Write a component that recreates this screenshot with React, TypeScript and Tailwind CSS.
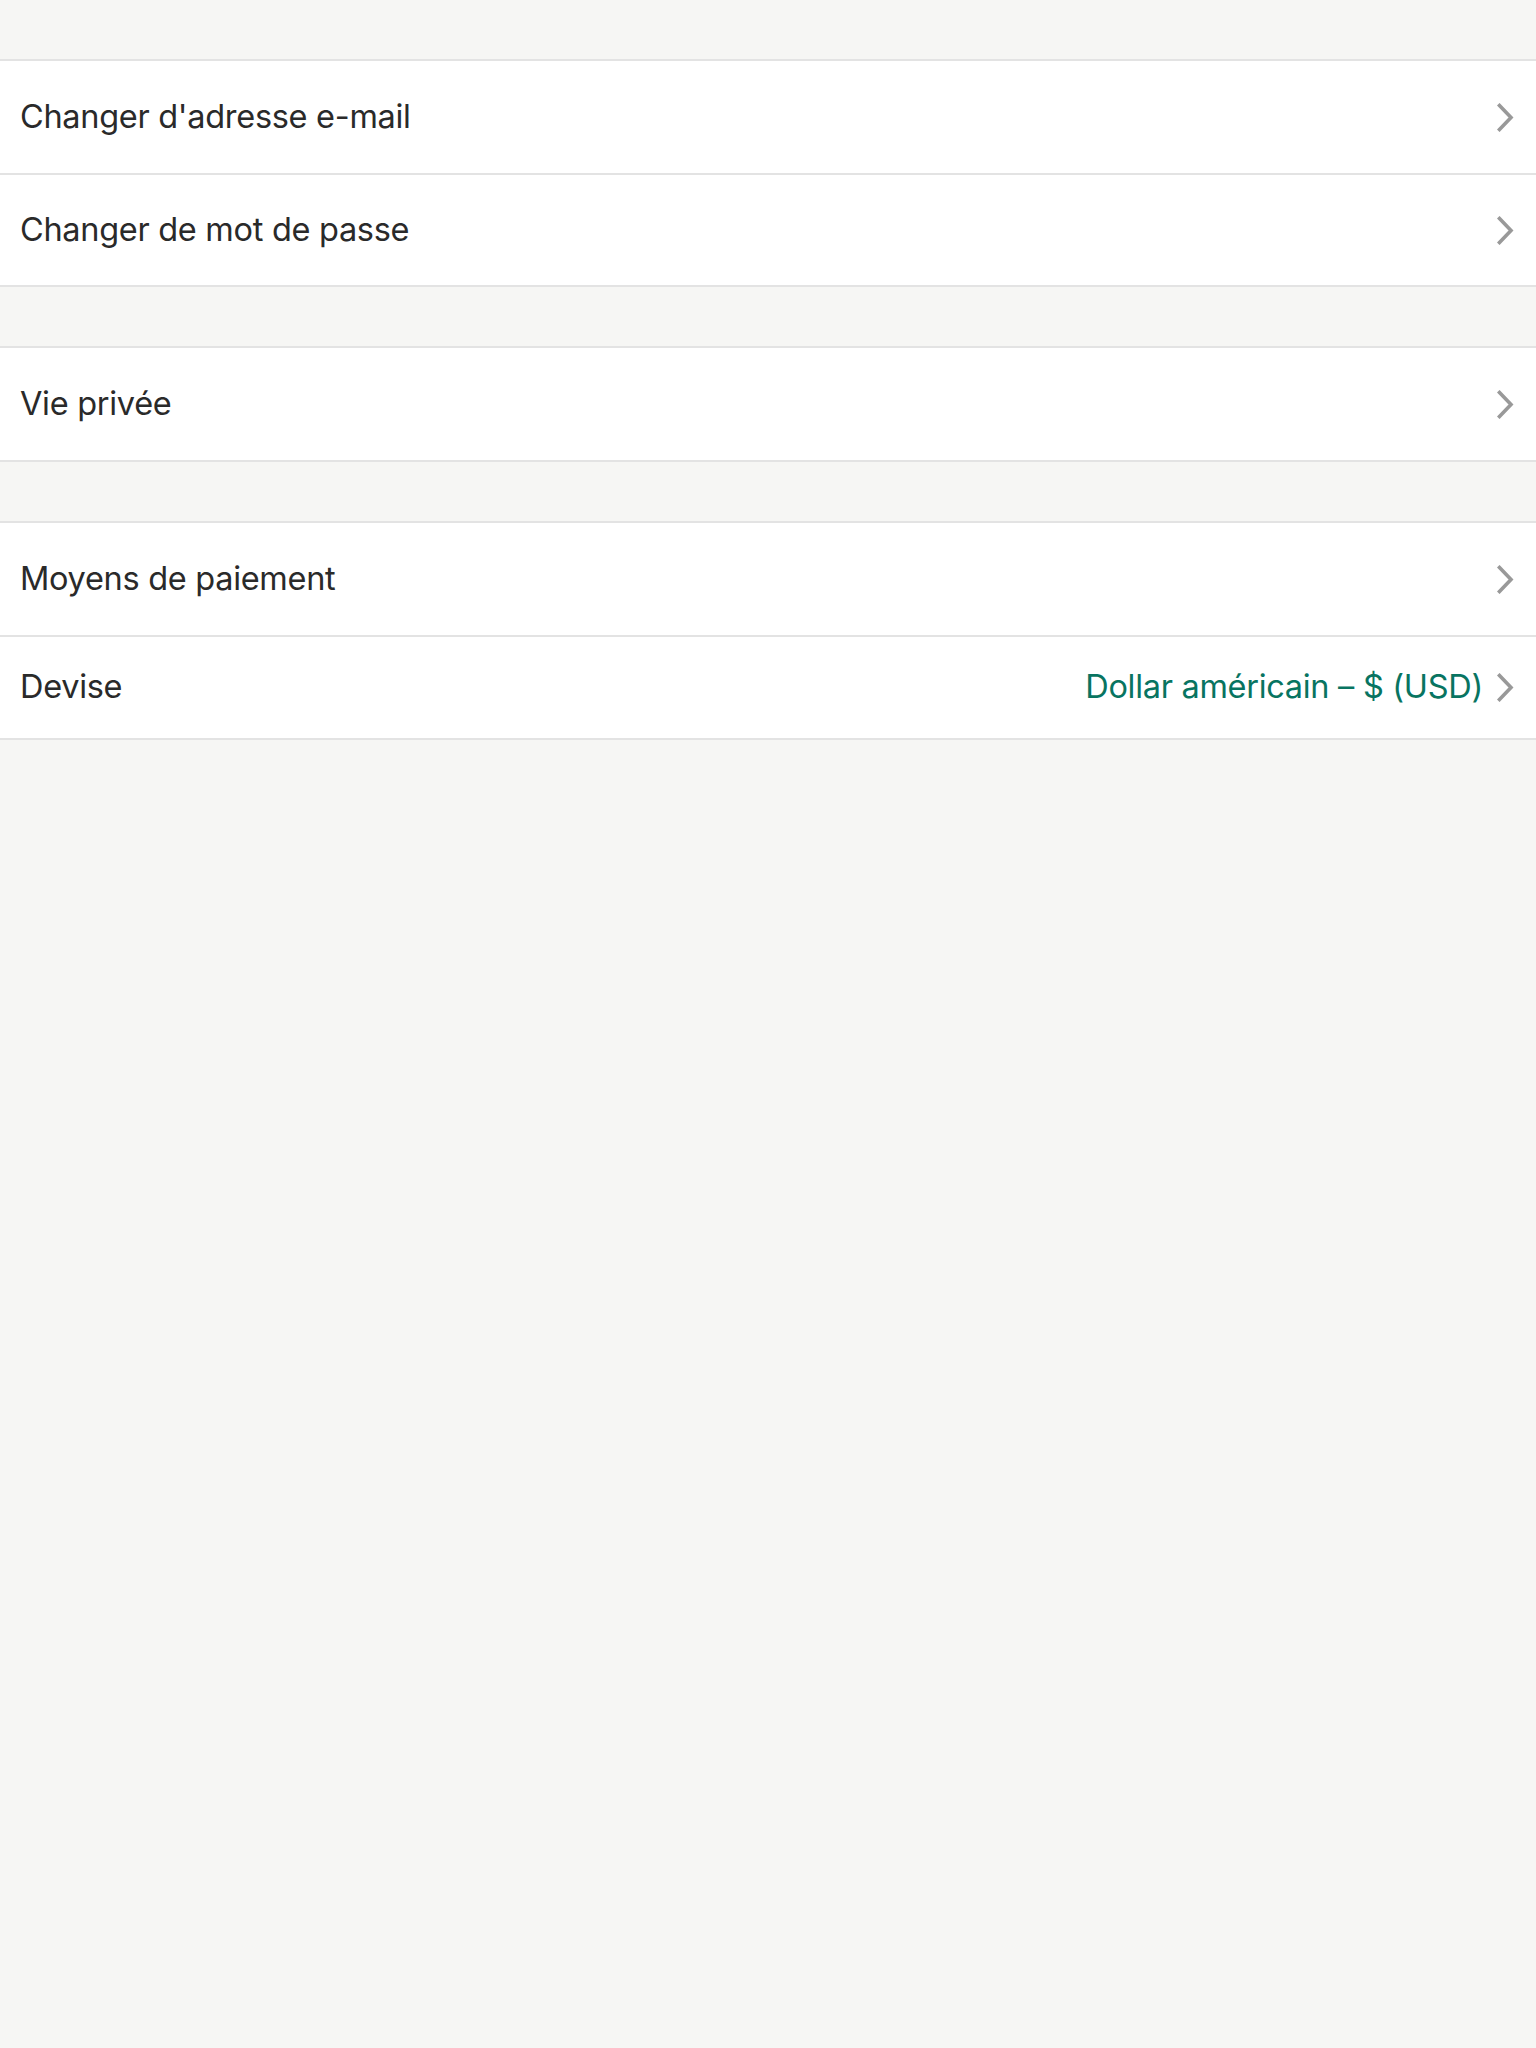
import React from "react";

interface Row {
  label: string;
  value?: string;
  short?: boolean;
}

const groups: Row[][] = [
  [{ label: "Changer d'adresse e-mail" }, { label: "Changer de mot de passe" }],
  [{ label: "Vie privée" }],
  [
    { label: "Moyens de paiement" },
    { label: "Devise", value: "Dollar américain – $ (USD)", short: true },
  ],
];

const Chevron: React.FC = () => (
  <svg width="17" height="29" viewBox="0 0 17 29" fill="none" className="shrink-0">
    <path d="M2.5 2.5L14 14.5L2.5 26.5" stroke="#999999" strokeWidth="3.6" strokeLinecap="square" strokeLinejoin="miter" />
  </svg>
);

const App: React.FC = () => {
  return (
    <div
      className="min-h-[2048px] w-full bg-[#f6f6f4] pt-[59px]"
      style={{ fontFamily: "Inter, 'Noto Sans', sans-serif" }}
    >
      {groups.map((group, gi) => (
        <div
          key={gi}
          className={`bg-white border-y-2 border-[#e3e3e3] ${gi > 0 ? "mt-[59px]" : ""}`}
        >
          {group.map((row, ri) => (
            <div
              key={row.label}
              className={`flex items-center justify-between pl-[20px] pr-[22px] ${
                row.short ? "h-[103px]" : "h-[112px]"
              } ${ri > 0 ? "border-t-2 border-[#e3e3e3]" : ""}`}
            >
              <span className="text-[32.5px] text-[#2a2a2a] tracking-[-0.3px]">{row.label}</span>
              <div className="flex items-center gap-[14px]">
                {row.value && (
                  <span className="text-[32.5px] text-[#087461] tracking-[-0.3px]">{row.value}</span>
                )}
                <Chevron />
              </div>
            </div>
          ))}
        </div>
      ))}
    </div>
  );
};

export default App;
